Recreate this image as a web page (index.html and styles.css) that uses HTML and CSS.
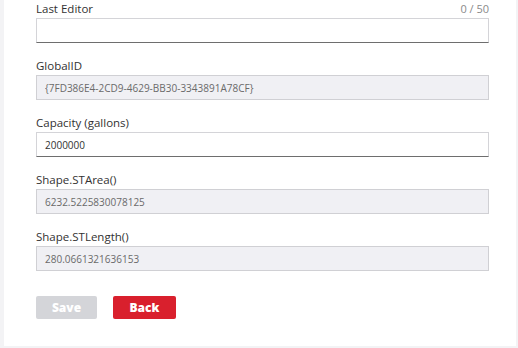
FILE: index.html
```html
<!DOCTYPE html>
<html lang="en">
<head>
  <meta charset="UTF-8">
  <meta name="viewport" content="width=device-width, initial-scale=1.0">
  <title>Edit Feature</title>
  <link rel="stylesheet" href="styles.css">
</head>
<body>
  <div class="panel">
    <form class="feature-form" onsubmit="return false">
      <!-- Editable text field with counter -->
      <div class="field">
        <div class="field-head">
          <label for="last-editor">Last Editor</label>
          <span class="counter">0 / 50</span>
        </div>
        <input type="text" id="last-editor" class="input">
      </div>

      <div class="field">
        <label for="global-id">GlobalID</label>
        <input type="text" id="global-id" class="input readonly" value="{7FD386E4-2CD9-4629-BB30-3343891A78CF}" readonly>
      </div>

      <div class="field">
        <label for="capacity">Capacity (gallons)</label>
        <input type="text" id="capacity" class="input" value="2000000">
      </div>

      <div class="field">
        <label for="st-area">Shape.STArea()</label>
        <input type="text" id="st-area" class="input readonly" value="6232.5225830078125" readonly>
      </div>

      <div class="field">
        <label for="st-length">Shape.STLength()</label>
        <input type="text" id="st-length" class="input readonly" value="280.0661321636153" readonly>
      </div>

      <div class="actions">
        <button type="submit" class="btn btn-save" disabled>Save</button>
        <button type="button" class="btn btn-back">Back</button>
      </div>
    </form>
  </div>
</body>
</html>
```

FILE: styles.css
```css
/* Reset some default styles */
* {
  margin: 0;
  padding: 0;
  box-sizing: border-box;
}

body {
  font-family: 'Open Sans', sans-serif;
  background: #f3f3f5;
  color: #323232;
  height: 100vh;
  overflow: hidden;
  padding: 0 2px 2px 4px;
}

.panel {
  background: #ffffff;
  height: 100%;
  padding: 2px 27px 0 32px;
}

.field {
  display: flex;
  flex-direction: column;
  margin-bottom: 16px;
}

.field-head {
  display: flex;
  justify-content: space-between;
  height: 14px;
  margin-bottom: 2px;
}

label {
  display: block;
  font-size: 11.5px;
  line-height: 14px;
  margin-bottom: 2px;
  color: #323232;
}

.field-head label {
  margin-bottom: 0;
}

.counter {
  font-size: 11px;
  line-height: 14px;
  color: #8a8a8a;
}

.input {
  width: 100%;
  height: 25px;
  padding: 0 8px;
  border: 1px solid #d4d4d8;
  border-bottom-color: #6e6e6e;
  background: #ffffff;
  color: #323232;
  font-family: 'Open Sans', sans-serif;
  font-size: 10px;
}

.input:focus {
  outline: none;
  border-color: #007ac2;
}

.input.readonly {
  background: #f0f0f4;
  border-color: #d0d0d4;
  color: #6a6a6a;
}

.actions {
  display: flex;
  gap: 16px;
  padding-top: 9px;
}

.btn {
  height: 23px;
  border: none;
  border-radius: 2px;
  color: #ffffff;
  font-family: 'Open Sans', sans-serif;
  font-size: 12px;
  font-weight: 800;
  cursor: pointer;
}

.btn-save {
  width: 61px;
  background: #d4d5d9;
  cursor: default;
}

.btn-back {
  width: 63px;
  background: #d9202d;
}

.btn-back:hover {
  background: #b91c27;
}
```
